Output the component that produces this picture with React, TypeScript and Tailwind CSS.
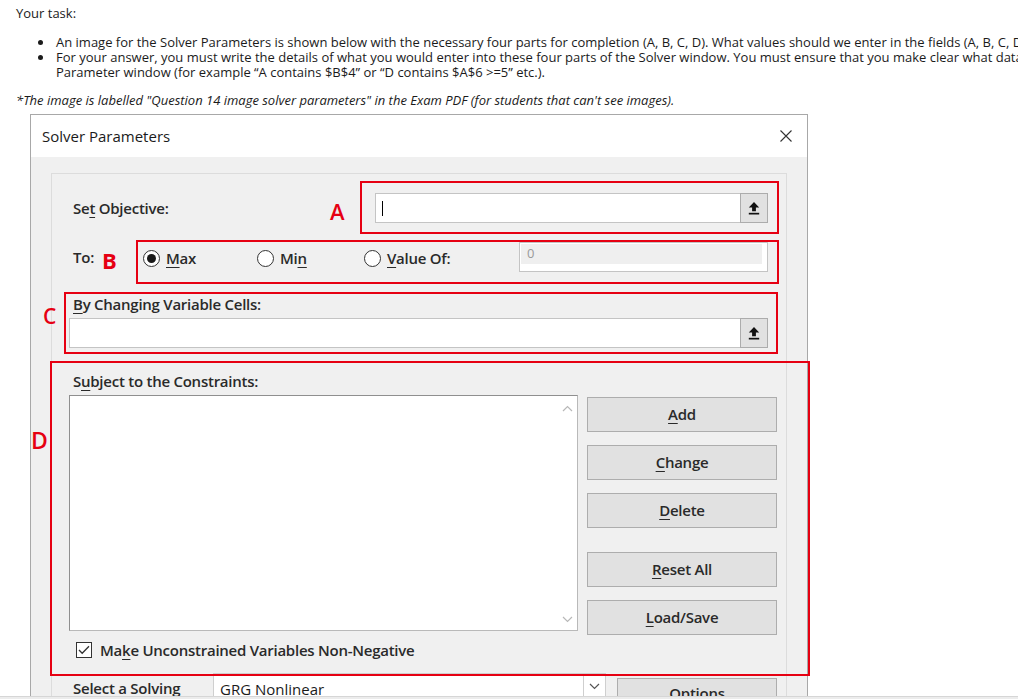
import React from "react";

const U = ({ children }: { children: React.ReactNode }) => (
  <span className="underline decoration-1 underline-offset-[3px]">{children}</span>
);

const UploadIcon = () => (
  <svg width="12" height="14" viewBox="0 0 12 14">
    <path d="M6 1 L11.2 6.6 H7.9 V10.2 H4.1 V6.6 H0.8 Z" fill="#111" />
    <rect x="0.8" y="11.8" width="10.4" height="1.7" fill="#111" />
  </svg>
);

const RefInput = ({ cursor }: { cursor?: boolean }) => (
  <div className="flex h-[30px] flex-1 items-center border-y border-l border-[#c4c4c4] bg-white">
    <div className="flex flex-1 items-center">
      {cursor && <div className="ml-[6px] h-[15px] w-px bg-black" />}
    </div>
    <button className="flex h-[30px] w-[28px] items-center justify-center border border-[#acacac] bg-[#e1e1e1]">
      <UploadIcon />
    </button>
  </div>
);

const Radio = ({ on }: { on?: boolean }) => (
  <span className="flex h-[17px] w-[17px] items-center justify-center rounded-full border border-[#333] bg-white">
    {on && <span className="h-[9px] w-[9px] rounded-full bg-[#1a1a1a]" />}
  </span>
);

const Chevron = ({ up }: { up?: boolean }) => (
  <svg width="11" height="7" viewBox="0 0 11 7">
    <polyline
      points={up ? "1,6 5.5,1.5 10,6" : "1,1 5.5,5.5 10,1"}
      fill="none"
      stroke="#b8b8b8"
      strokeWidth="1.2"
    />
  </svg>
);

const DlgButton = ({ children, gap }: { children: React.ReactNode; gap?: string }) => (
  <button
    className={
      "flex h-[35px] w-[190px] items-center justify-center border border-[#adadad] bg-[#e1e1e1] text-[15px] font-semibold tracking-[-0.25px] text-[#2a2a2a] " +
      (gap ?? "")
    }
  >
    {children}
  </button>
);

const Bullet = () => (
  <span className="flex w-[18px] shrink-0 items-center">
    <span className="h-[5px] w-[5px] rounded-full bg-[#1b1b1b]" />
  </span>
);

const Annotations = () => (
  <>
    <div className="absolute left-[360px] top-[181px] h-[53px] w-[419px] border-2 border-[#e60012]" />
    <div className="absolute left-[136px] top-[240px] h-[44px] w-[643px] border-2 border-[#e60012]" />
    <div className="absolute left-[64px] top-[292px] h-[62px] w-[714px] border-2 border-[#e60012]" />
    <div className="absolute left-[50px] top-[361px] h-[315px] w-[760px] border-2 border-[#e60012]" />
    <div className="absolute left-[330px] top-[200px] text-[22px] font-semibold leading-none text-[#e60012]">A</div>
    <div className="absolute left-[102px] top-[249px] text-[22px] font-bold leading-none text-[#e60012]">B</div>
    <div className="absolute left-[43px] top-[306px] text-[21px] font-semibold leading-none text-[#e60012]">C</div>
    <div className="absolute left-[31px] top-[429px] text-[23px] font-semibold leading-none text-[#e60012]">D</div>
  </>
);

export default function App() {
  return (
    <div className="flex h-[699px] w-full flex-col overflow-hidden bg-white font-['Open_Sans',sans-serif] text-[#1b1b1b]">
      <div className="relative h-[696px] overflow-hidden">
        <div className="pl-[16px] pt-[6px] text-[13px] leading-[15px]">
          <p>Your task:</p>
          <ul className="mt-[14px] pl-[22px]">
            <li className="flex whitespace-nowrap">
              <Bullet />
              <span>
                An image for the Solver Parameters is shown below with the necessary four parts for completion (A, B, C, D). What values should we enter in the fields (A, B, C, D)?
              </span>
            </li>
            <li className="flex whitespace-nowrap">
              <Bullet />
              <span>
                For your answer, you must write the details of what you would enter into these four parts of the Solver window. You must ensure that you make clear what data goes into each
              </span>
            </li>
            <li className="whitespace-nowrap pl-[18px]">
              Parameter window (for example “A contains $B$4” or “D contains $A$6 &gt;=5” etc.).
            </li>
          </ul>
          <p className="mt-[13px] italic">
            *The image is labelled "Question 14 image solver parameters" in the Exam PDF (for students that can't see images).
          </p>
        </div>

        {/* Solver dialog */}
        <div className="ml-[30px] mt-[6px] w-[778px] border border-[#a8a8a8] bg-[#f0f0f0]">
          <div className="flex h-[42px] items-center justify-between bg-white pl-[11px] pr-[15px]">
            <span className="text-[15px] text-[#1b1b1b]">Solver Parameters</span>
            <svg width="12" height="12" viewBox="0 0 12 12">
              <path d="M0.5 0.5 L11.5 11.5 M11.5 0.5 L0.5 11.5" stroke="#333" strokeWidth="1.1" />
            </svg>
          </div>

          <div className="px-[20px] pt-[16px]">
            <div className="h-[540px] border border-[#dcdcdc] pl-[17px] pr-[9px] pt-[19px] text-[15px] font-semibold tracking-[-0.25px] text-[#2a2a2a]">
              {/* Set objective */}
              <div className="flex h-[30px] items-center">
                <span className="w-[306px] shrink-0 pl-[4px]">
                  Se<U>t</U> Objective:
                </span>
                <div className="mr-[9px] flex flex-1">
                  <RefInput cursor />
                </div>
              </div>

              {/* To */}
              <div className="mt-[19px] flex h-[30px] items-center">
                <span className="w-[74px] shrink-0 pl-[4px]">To:</span>
                <div className="flex w-[114px] shrink-0 items-center gap-[6px] pt-[3px]">
                  <Radio on />
                  <span>
                    <U>M</U>ax
                  </span>
                </div>
                <div className="flex w-[107px] shrink-0 items-center gap-[6px] pt-[3px]">
                  <Radio />
                  <span>
                    Mi<U>n</U>
                  </span>
                </div>
                <div className="flex w-[155px] shrink-0 items-center gap-[6px] pt-[3px]">
                  <Radio />
                  <span>
                    <U>V</U>alue Of:
                  </span>
                </div>
                <div className="mr-[9px] h-[30px] flex-1 border border-[#c4c4c4] bg-white pb-[7px] pl-px pr-[5px] pt-px">
                  <div className="h-full bg-[#efefef] pl-[6px] text-[13px] font-normal leading-[18px] text-[#9a9a9a]">0</div>
                </div>
              </div>

              {/* By changing */}
              <div className="mt-[22px] h-[20px] pl-[4px] leading-[20px]">
                <U>B</U>y Changing Variable Cells:
              </div>
              <div className="mr-[9px] mt-[4px] flex">
                <RefInput />
              </div>

              {/* Constraints */}
              <div className="mt-[23px] h-[20px] pl-[4px] leading-[20px]">
                S<U>u</U>bject to the Constraints:
              </div>
              <div className="mt-[4px] flex h-[236px] items-start">
                <div className="flex h-[236px] w-[509px] shrink-0 justify-end border border-t-[#8f8f8f] border-l-[#8f8f8f] border-r-[#b9b9b9] border-b-[#b9b9b9] bg-white">
                  <div className="flex w-[20px] flex-col items-center justify-between pb-[7px] pt-[9px]">
                    <Chevron up />
                    <Chevron />
                  </div>
                </div>
                <div className="ml-[9px] flex flex-col pt-[2px]">
                  <DlgButton>
                    <U>A</U>dd
                  </DlgButton>
                  <DlgButton gap="mt-[13px]">
                    <U>C</U>hange
                  </DlgButton>
                  <DlgButton gap="mt-[13px]">
                    <U>D</U>elete
                  </DlgButton>
                  <DlgButton gap="mt-[24px]">
                    <U>R</U>eset All
                  </DlgButton>
                  <DlgButton gap="mt-[13px]">
                    <U>L</U>oad/Save
                  </DlgButton>
                </div>
              </div>

              {/* Checkbox */}
              <div className="mt-[11px] flex h-[16px] items-center pl-[7px]">
                <span className="flex h-[16px] w-[16px] shrink-0 items-center justify-center border border-[#333] bg-white">
                  <svg width="12" height="10" viewBox="0 0 12 10">
                    <polyline points="1,5 4.2,8.3 11,1.2" fill="none" stroke="#333" strokeWidth="1.3" />
                  </svg>
                </span>
                <span className="ml-[8px]">
                  Ma<U>k</U>e Unconstrained Variables Non-Negative
                </span>
              </div>

              {/* Solving method */}
              <div className="mt-[15px] flex items-start">
                <span className="w-[144px] shrink-0 pl-[4px] pt-[5px] leading-[20px]">
                  S<U>e</U>lect a Solving
                </span>
                <div className="flex h-[30px] w-[393px] shrink-0 border-l border-t border-[#cfcfcf] bg-white">
                  <span className="flex-1 pl-[6px] pt-[3px] font-normal leading-[24px] tracking-normal text-[#1b1b1b]">GRG Nonlinear</span>
                  <div className="flex w-[23px] justify-center border-x border-[#cfcfcf] pt-[9px]">
                    <svg width="11" height="7" viewBox="0 0 11 7">
                      <polyline points="1,1 5.5,5.5 10,1" fill="none" stroke="#555" strokeWidth="1.2" />
                    </svg>
                  </div>
                </div>
                <button className="ml-[11px] mt-[5px] flex h-[35px] w-[160px] shrink-0 justify-center border border-[#adadad] bg-[#e1e1e1] pt-[4px] text-[15px] font-semibold leading-[20px] text-[#2a2a2a]">
                  <span>
                    O<U>p</U>tions
                  </span>
                </button>
              </div>
            </div>
          </div>
        </div>

        <Annotations />
      </div>
      <div className="h-[3px] border-t border-[#d6d6d6] bg-[#ececec]" />
    </div>
  );
}
